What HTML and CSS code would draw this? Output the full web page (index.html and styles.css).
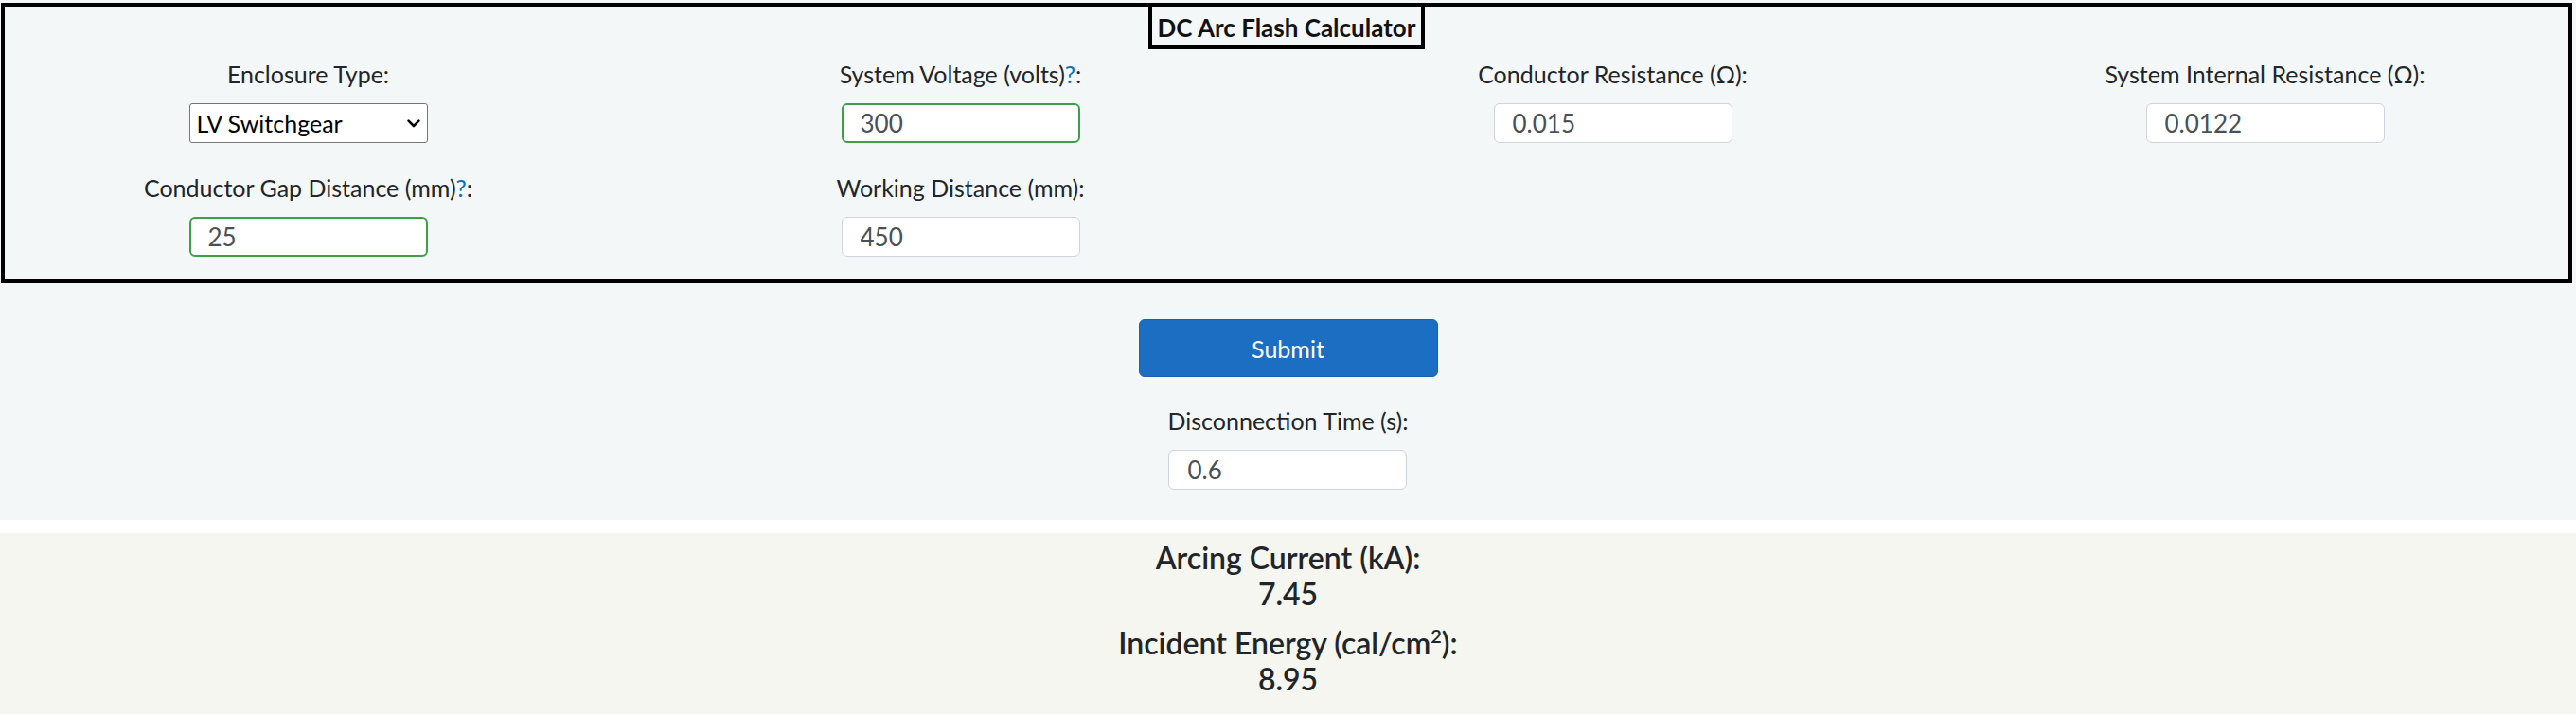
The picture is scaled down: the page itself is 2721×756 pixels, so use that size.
FILE: index.html
```html
<!DOCTYPE html>
<html lang="en">
<head>
    <meta charset="UTF-8">
    <meta name="viewport" content="width=device-width, initial-scale=1.0">
    <title>DC Arc Flash Calculator</title>
    <link rel="stylesheet" href="styles.css">
</head>
<body>
    <div class="calc">
        <div class="panel">
            <div class="panel-title">DC Arc Flash Calculator</div>

            <div class="fields">
                <div class="field">
                    <label for="enclosure">Enclosure Type:</label>
                    <div class="select-wrap">
                        <select id="enclosure">
                            <option>LV Switchgear</option>
                            <option>MCC</option>
                            <option>Panelboard</option>
                            <option>Open Air</option>
                        </select>
                        <svg class="chevron" width="14" height="9" viewBox="0 0 14 9"><path d="M1.6 1.6 L7 7 L12.4 1.6" fill="none" stroke="#000" stroke-width="2.6" stroke-linecap="round" stroke-linejoin="round"/></svg>
                    </div>
                </div>
                <div class="field">
                    <label for="voltage">System Voltage (volts)<a href="#" class="hint">?</a>:</label>
                    <input type="number" id="voltage" class="valid" value="300">
                </div>
                <div class="field">
                    <label for="cond-res">Conductor Resistance (Ω):</label>
                    <input type="number" id="cond-res" value="0.015">
                </div>
                <div class="field">
                    <label for="int-res">System Internal Resistance (Ω):</label>
                    <input type="number" id="int-res" value="0.0122">
                </div>
                <div class="field">
                    <label for="gap">Conductor Gap Distance (mm)<a href="#" class="hint">?</a>:</label>
                    <input type="number" id="gap" class="valid" value="25">
                </div>
                <div class="field">
                    <label for="working">Working Distance (mm):</label>
                    <input type="number" id="working" value="450">
                </div>
            </div>
        </div>

        <div class="actions">
            <button type="button" class="btn">Submit</button>
            <div class="field">
                <label for="time">Disconnection Time (s):</label>
                <input type="number" id="time" value="0.6">
            </div>
        </div>
    </div>

    <div class="results">
        <div class="result">
            <div>Arcing Current (kA):</div>
            <div>7.45</div>
        </div>
        <div class="result">
            <div>Incident Energy (cal/cm<sup>2</sup>):</div>
            <div>8.95</div>
        </div>
    </div>
</body>
</html>
```

FILE: styles.css
```css
body {
    margin: 0;
    font-family: Lato, "Open Sans", sans-serif;
    font-size: 25px;
    line-height: 36px;
    color: #212529;
    background-color: #fff;
}
.calc {
    background-color: #f4f7f8;
    padding: 3px 0 32px;
}
.panel {
    margin: 0 4px 0 1px;
    border: 4px solid #000;
    padding-bottom: 24px;
    overflow: hidden;
}
.panel-title {
    width: fit-content;
    margin: 0 auto 8px;
    padding: 7px 6px 4px;
    border: 4px solid #000;
    border-top: none;
    font-size: 26px;
    line-height: 30px;
    font-weight: bold;
    color: #111;
}
.fields {
    display: grid;
    grid-template-columns: repeat(4, 1fr);
    row-gap: 29px;
    margin: 0 -24px;
}
.field {
    display: flex;
    flex-direction: column;
    align-items: center;
    gap: 13px;
}
.hint {
    color: #0071c1;
    text-decoration: none;
}
input {
    box-sizing: border-box;
    width: 252px;
    height: 42px;
    padding: 0 19px;
    border: 1px solid #ced4da;
    border-radius: 6px;
    background: #fff;
    font-family: inherit;
    font-size: 26px;
    color: #495057;
    outline: none;
    -moz-appearance: textfield;
}
input::-webkit-inner-spin-button,
input::-webkit-outer-spin-button {
    -webkit-appearance: none;
    margin: 0;
}
input.valid {
    border: 2px solid #3d9f48;
    padding: 0 18px;
}
.select-wrap {
    position: relative;
    width: 252px;
    height: 42px;
}
select {
    box-sizing: border-box;
    width: 100%;
    height: 100%;
    padding: 0 30px 0 7px;
    border: 1px solid #767676;
    border-radius: 3px;
    background: #fff;
    font-family: inherit;
    font-size: 25px;
    color: #000;
    -webkit-appearance: none;
    appearance: none;
}
.chevron {
    position: absolute;
    right: 8px;
    top: 17px;
    pointer-events: none;
}
.actions {
    display: flex;
    flex-direction: column;
    align-items: center;
    margin-top: 38px;
}
.btn {
    width: 316px;
    height: 61px;
    margin-bottom: 28px;
    border: 1px solid #1861ac;
    border-radius: 6px;
    background-color: #1b6ec2;
    color: #fff;
    font-family: inherit;
    font-size: 25px;
    cursor: pointer;
}
.results {
    margin-top: 14px;
    padding: 7px 0 18px;
    background-color: #f4f6ef;
    text-align: center;
    font-size: 32px;
    line-height: 38px;
    font-weight: 600;
}
.result + .result {
    margin-top: 14px;
}
sup {
    font-size: 20px;
    line-height: 0;
}
```
